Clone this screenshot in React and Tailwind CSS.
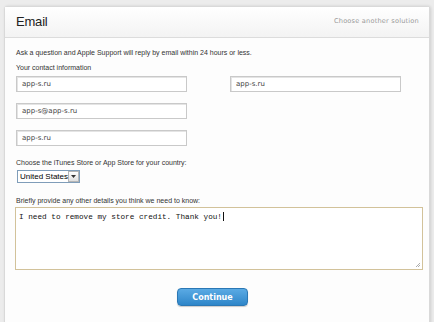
import React from 'react';

const sans = { fontFamily: 'Verdana, "DejaVu Sans", sans-serif' };

const Field = ({ value }) => (
  <div className="h-[16px] w-[171px] border border-[#c9c9c9] bg-white shadow-[inset_1px_1px_0_#e4e4e4] px-[5px] flex items-center text-[7px] text-[#444] font-['DejaVu_Sans',sans-serif]">
    {value}
  </div>
);

export default function App() {
  return (
    <div className="w-[434px] h-[322px] overflow-hidden bg-[#ececec] px-[4px] pt-[6px] font-['Liberation_Sans',sans-serif]">
      <div className="h-[340px] bg-[#fdfdfd] border border-[#d9d9d9] rounded-t-[3px] shadow-[1px_0_3px_rgba(0,0,0,0.12)]">
        {/* Header */}
        <div className="h-[31px] flex items-center justify-between pl-[11px] pr-[10px] border-b border-[#dcdcdc] bg-linear-to-b from-white to-[#f3f3f3]">
          <span className="text-[13px] text-[#222] tracking-[-0.2px]">Email</span>
          <span className="text-[6.6px] text-[#9a9a9a] tracking-[0.2px] font-['DejaVu_Sans',sans-serif]">Choose another solution</span>
        </div>

        {/* Body */}
        <div className="pl-[11px] pr-[8px] text-[7px] leading-[9px] text-[#333]">
          <p className="mt-[10px]">
            Ask a question and Apple Support will reply by email within 24 hours or less.
          </p>
          <p className="mt-[6px]">Your contact information</p>

          <div className="mt-[4px] flex gap-[43px]">
            <div className="flex flex-col gap-[11px]">
              <Field value="app-s.ru" />
              <Field value="app-s@app-s.ru" />
              <Field value="app-s.ru" />
            </div>
            <div>
              <Field value="app-s.ru" />
            </div>
          </div>

          <p className="mt-[12px]">
            Choose the iTunes Store or App Store for your country:
          </p>
          <div className="ml-[1px] mt-[3px] h-[13px] w-[63px] border border-[#7f9db9] bg-white flex items-center justify-between">
            <span className="pl-[2px] text-[8px] text-black leading-none whitespace-nowrap">United States</span>
            <span className="h-[11px] w-[11px] border border-[#b5b5b5] bg-linear-to-b from-white to-[#e0e0e0] flex items-center justify-center">
              <svg width="5" height="3" viewBox="0 0 5 3"><path d="M0 0h5L2.5 3z" fill="#333" /></svg>
            </span>
          </div>

          <p className="mt-[13px]">
            Briefly provide any other details you think we need to know:
          </p>
          <div className="relative mt-[2px] -ml-[1px] h-[63px] w-[408px] border border-[#d2c29a] bg-white px-[3px] pt-[4px] text-[7.7px] leading-[10px]">
            <span className="text-[#111] font-['Liberation_Mono',monospace] whitespace-nowrap">
              I need to remove my store credit. Thank you!
            </span>
            <span className="inline-block align-middle ml-[1px] h-[9px] w-px bg-[#111]" />
            <svg className="absolute right-[1px] bottom-[1px]" width="6" height="6" viewBox="0 0 6 6">
              <path d="M5 1L1 5M5 3L3 5" stroke="#999" strokeWidth="0.8" />
            </svg>
          </div>

          <div className="flex justify-center mt-[18px] pr-[12px]">
            <button
              className="h-[18px] w-[71px] rounded-[4px] border border-[#2b78b5] bg-linear-to-b from-[#5aaae4] to-[#2d86c9] text-white text-[8px] font-bold shadow-[0_1px_1px_rgba(0,0,0,0.2)]"
              style={sans}
            >
              Continue
            </button>
          </div>
        </div>
      </div>
    </div>
  );
}
